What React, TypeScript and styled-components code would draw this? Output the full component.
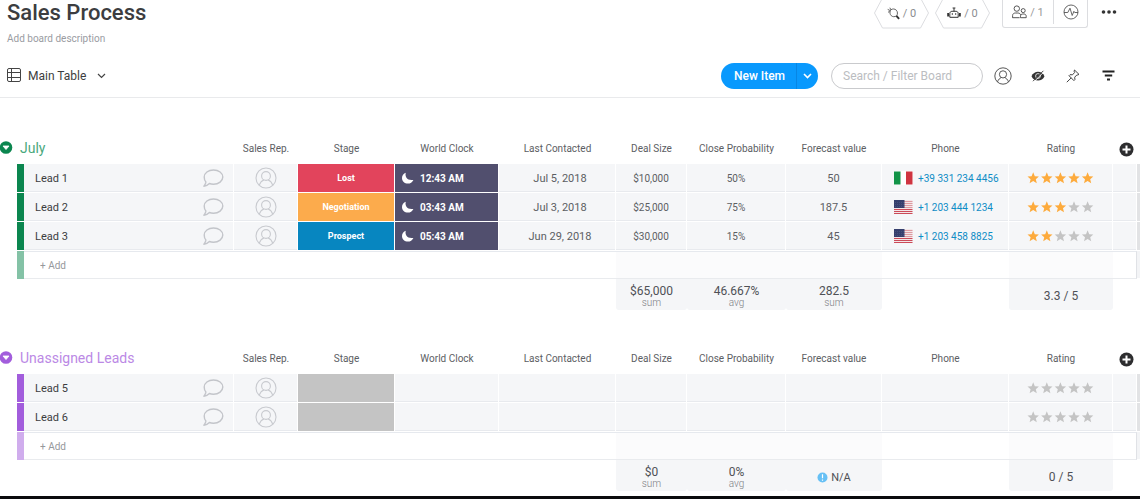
import React from 'react';
import styled, { createGlobalStyle } from 'styled-components';

const GlobalStyle = createGlobalStyle`
  * { box-sizing: border-box; }
  body {
    margin: 0;
    background: #fff;
    color: #3c3d40;
    font-family: Roboto, "Liberation Sans", sans-serif;
    font-size: 12px;
  }
  button, input { font-family: inherit; }
`;

/* ---------- Layout ---------- */

const Page = styled.div`
  display: flex;
  flex-direction: column;
`;

const Header = styled.header`
  display: flex;
  flex-direction: column;
  border-bottom: 1px solid #e9eaec;
`;

const HeaderTop = styled.div`
  display: flex;
  justify-content: space-between;
  align-items: flex-start;
  height: 54px;
  padding: 0 22px 0 7px;
`;

const Titles = styled.div`
  display: flex;
  flex-direction: column;
`;

const Title = styled.h1`
  margin: 0;
  font-size: 22px;
  line-height: 26px;
  font-weight: 500;
`;

const Description = styled.p`
  margin: 5px 0 0;
  font-size: 10px;
  line-height: 16px;
  color: #9a9ca2;
`;

const BoardActions = styled.div`
  display: flex;
  align-items: flex-start;
`;

const PlainButton = styled.button`
  display: inline-flex;
  align-items: center;
  justify-content: center;
  padding: 0;
  border: 0;
  background: none;
  color: inherit;
  font-size: 12px;
  cursor: pointer;
`;

const HexButton = styled(PlainButton)`
  position: relative;
  width: 55px;
  height: 29px;
  margin-right: 6px;
  padding-bottom: 3px;
  gap: 3px;
  color: #8a8c90;
  font-size: 11px;
`;

const HexOutline = styled.svg`
  position: absolute;
  inset: 0;
`;

const ActionBox = styled.div`
  display: flex;
  height: 28px;
  margin: 0 12px 0 6px;
  border: 1px solid #dcdde0;
  border-top: 0;
  border-radius: 0 0 3px 3px;
`;

const BoxButton = styled(PlainButton)<{ $width: number; $divided?: boolean }>`
  width: ${p => p.$width}px;
  height: 24px;
  gap: 3px;
  color: #999;
  font-size: 11px;
  border-right: ${p => (p.$divided ? '1px solid #dcdde0' : '0')};
`;

const MoreButton = styled(PlainButton)`
  width: 18px;
  height: 24px;
`;

const Toolbar = styled.div`
  display: flex;
  justify-content: space-between;
  align-items: center;
  height: 43px;
  padding: 0 22px 0 7px;
`;

const ViewButton = styled(PlainButton)`
  font-size: 12px;
  gap: 6px;
  svg:last-child { margin-left: 5px; }
`;

const Tools = styled.div`
  display: flex;
  align-items: center;
`;

const SplitButton = styled.div`
  display: flex;
  height: 26px;
  margin-right: 13px;
  border-radius: 13px;
  overflow: hidden;
  background: #0999fd;
  color: #fff;
`;

const NewItem = styled(PlainButton)`
  width: 76px;
  padding-left: 2px;
  font-weight: 500;
  border-right: 1px solid #0786e4;
`;

const NewItemMenu = styled(PlainButton)`
  width: 21px;
`;

const Search = styled.input`
  width: 152px;
  height: 26px;
  margin-right: 10px;
  padding: 0 11px;
  border: 1px solid #c9cacd;
  border-radius: 13px;
  outline: 0;
  font-size: 12px;
  color: #333;
  &::placeholder { color: #bbbdc1; opacity: 1; }
`;

const ToolIcons = styled.div`
  display: flex;
  gap: 15px;
`;

const ToolButton = styled(PlainButton)`
  width: 20px;
  height: 20px;
`;

const Groups = styled.main`
  display: flex;
  flex-direction: column;
  gap: 32px;
  padding: 34px 0 5px;
  overflow-x: auto;
`;

const BottomBar = styled.div`
  height: 3px;
  background: #0b0b0d;
`;

/* ---------- Table ---------- */

const Table = styled.table`
  width: 100%;
  min-width: 1060px;
  table-layout: fixed;
  border-spacing: 0;
  td, th { padding: 0; }
`;

const Col = styled.col<{ $width?: number }>`
  width: ${p => (p.$width ? `${p.$width}px` : 'auto')};
`;

const ColumnHead = styled.th`
  height: 32px;
  font-size: 10px;
  font-weight: 400;
  color: #5c5e63;
  text-align: center;
  white-space: nowrap;
  svg { display: block; }
`;

const GroupHead = styled(ColumnHead)`
  text-align: left;
`;

const GroupToggle = styled(PlainButton)<{ $color: string }>`
  gap: 7px;
  font-size: 14px;
  color: ${p => p.$color};
`;

const AddColumn = styled(PlainButton)`
  display: flex;
  margin: 2px auto 0;
`;

const Bar = styled.td<{ $color: string; $faded?: boolean }>`
  background: ${p => p.$color};
  background-clip: padding-box;
  border-bottom: ${p => (p.$faded ? 0 : 1)}px solid #fff;
  opacity: ${p => (p.$faded ? 0.5 : 1)};
`;

const Cell = styled.td`
  height: 29px;
  text-align: center;
  font-size: 10px;
  color: #5c5e63;
  background: #f5f6f8;
  background-clip: padding-box;
  border-right: 1px solid #fff;
  border-bottom: 1px solid #fff;
  box-shadow: inset 0 -1px #e8eaee;
`;

const WideTextCell = styled(Cell)`
  font-size: 11px;
`;

const DateCell = styled(WideTextCell)`
  && { padding-left: 6px; }
`;

const NameInner = styled.div`
  display: flex;
  align-items: center;
  justify-content: space-between;
  padding: 0 9px 0 11px;
  font-size: 11px;
  color: #3c3d40;
`;

const StageCell = styled(Cell)<{ $color: string }>`
  background-color: ${p => p.$color};
  color: #fff;
  font-size: 9px;
  font-weight: 700;
  box-shadow: none;
`;

const ClockCell = styled(Cell)`
  background-color: #514f6e;
  color: #fff;
  font-weight: 700;
  box-shadow: none;
`;

const CellRow = styled.div<{ $gap: number; $pad: number }>`
  display: flex;
  align-items: center;
  gap: ${p => p.$gap}px;
  padding-left: ${p => p.$pad}px;
  white-space: nowrap;
`;

const PhoneLink = styled.a`
  font-size: 10px;
  color: #0f8dc6;
  text-decoration: none;
`;

const Scroll = styled.td<{ $light?: boolean }>`
  background: ${p => (p.$light ? '#f3f4f6' : '#e2e3e5')};
  background-clip: padding-box;
  border-bottom: 1px solid #fff;
`;

const AddCell = styled.td<{ $tint?: boolean; $end?: boolean }>`
  height: 28px;
  background: ${p => (p.$tint ? '#fbfbfc' : '#fff')};
  border-top: 1px solid #e6e9ee;
  border-bottom: 1px solid #e9ebee;
  border-right: ${p => (p.$end ? '1px solid #e0e2e6' : '0')};
`;

const AddInput = styled.input`
  display: block;
  width: 100%;
  height: 24px;
  padding: 0 16px;
  border: 0;
  outline: 0;
  background: none;
  font-size: 10px;
  &::placeholder { color: #96989c; opacity: 1; }
`;

const SumCell = styled.td<{ $filled?: boolean }>`
  height: 31px;
  text-align: center;
  background: ${p => (p.$filled ? '#f5f6f8' : 'transparent')};
  border-radius: 0 0 3px 3px;
  && { padding-top: 3px; }
`;

const SumValue = styled.div`
  display: flex;
  align-items: center;
  justify-content: center;
  gap: 3px;
  font-size: 12px;
  line-height: 13px;
  color: #4f5156;
`;

const NotAvailable = styled(SumValue)`
  font-size: 11px;
`;

const SumUnit = styled.div`
  font-size: 10px;
  line-height: 10px;
  font-weight: 300;
  color: #7d7f85;
`;

/* ---------- Icons ---------- */

const Person = ({ size, color }: { size: number; color: string }) => (
  <svg width={size} height={size} viewBox="0 0 22 22" fill="none" stroke={color} strokeWidth="1.1">
    <circle cx="11" cy="11" r="10" />
    <circle cx="11" cy="9" r="4.4" />
    <path d="M4.3 18.2c.9-3 3-4.6 4.6-5.2M17.7 18.2c-.9-3-3-4.6-4.6-5.2" />
  </svg>
);

const Bubble = () => (
  <svg width="22" height="20" viewBox="0 0 22 20" fill="none" stroke="#c3c5ca" strokeWidth="1.4" strokeLinejoin="round">
    <path d="M11.500 2c5.200 0 9.300 3.100 9.300 7.100s-4.100 7.100-9.300 7.100c-1.500 0-2.900-.2-4.100-.7-1.600 1.700-3.500 2.500-5.500 2.700 1.200-1.300 1.900-2.700 2-4.300C2.600 12.700 2.200 11 2.200 9.100c0-4 4.100-7.100 9.300-7.100Z" />
  </svg>
);

const Chevron = ({ color, width = 1.2 }: { color: string; width?: number }) => (
  <svg width="9" height="6" viewBox="0 0 9 6" fill="none" stroke={color} strokeWidth={width}>
    <path d="M1 1l3.500 3.500L8 1" />
  </svg>
);

const TableIcon = () => (
  <svg width="15" height="15" viewBox="0 0 15 15" fill="none" stroke="#444" strokeWidth="1">
    <rect x=".5" y=".5" width="13" height="13" rx="1.500" />
    <path d="M.5 4.500h13M.5 9.500h13M4.500.5v13" />
  </svg>
);

const Plug = () => (
  <svg width="13" height="13" viewBox="0 0 13 13" fill="none" stroke="#555" strokeWidth=".9" strokeLinejoin="round">
    <path d="M3.800 2.800C5.600 1.600 7.900 1.700 9.300 3.200c1.500 1.600 1.500 3.900.3 5.700-1.900 1.100-4 1.100-5.400-.3C2.800 7.200 2.600 5.200 3.400 3.700Z" />
    <path d="M.7 2.400l2.700 1.300M2.900.7l.9 2.100M1 5.200l1.800-.6" />
    <path d="M9.400 8.900l2.700 3" stroke="#333" strokeWidth="1.900" />
  </svg>
);

const Robot = () => (
  <svg width="14" height="12" viewBox="0 0 14 12" fill="none" stroke="#333" strokeWidth="1">
    <path d="M7 1v3M5.600 1h2.800" />
    <path d="M2.800 10.300V6.600c0-1.500 1-2.300 2.300-2.300h3.800c1.300 0 2.300.8 2.300 2.300v3.700Z" />
    <path d="M1.100 6v3.600M12.900 6v3.600" strokeWidth="1.800" />
    <path d="M5.300 6.200v1.600M8.700 6.200v1.600" />
  </svg>
);

const People = () => (
  <svg width="15" height="14" viewBox="0 0 15 14" fill="none" stroke="#444" strokeWidth=".9">
    <circle cx="4.800" cy="3.600" r="2.700" />
    <path d="M.6 12.800V10.500C.6 8.800 2 8 3.500 8h2.300c1.500 0 2.700.7 2.900 2.200M.6 12.700h7" />
    <circle cx="11.200" cy="5.600" r="2" />
    <path d="M8.500 12.700v-1.500c0-1.300 1-2.200 2.200-2.200h1.200c1.300 0 2.300.9 2.300 2.200v1.500Z" />
  </svg>
);

const Pulse = () => (
  <svg width="16" height="16" viewBox="0 0 16 16" fill="none" stroke="#555" strokeWidth=".9">
    <circle cx="8" cy="8" r="7" />
    <path d="M1 8.500h3.800L7 4.200l2.200 7.300 1.700-4.200.8 1.200H15" />
  </svg>
);

const HiddenEye = () => (
  <svg width="14" height="12" viewBox="0 0 14 12">
    <path d="M.5 6.300C1.800 3.200 4.200 1.700 7 1.700s5.200 1.500 6.500 4.600C12.200 9.400 9.800 10.500 7 10.500S1.800 9.400.5 6.300Z" fill="#333" />
    <circle cx="7" cy="6" r="2.400" fill="none" stroke="#fff" strokeWidth=".8" />
    <path d="M3.600 11.200 13 1.800" stroke="#fff" strokeWidth=".8" />
    <path d="M2 11.200 12.400.8" stroke="#444" strokeWidth="1" />
  </svg>
);

const Pin = () => (
  <svg width="14" height="14" viewBox="0 0 14 14" fill="none" stroke="#444" strokeWidth="1" strokeLinejoin="round">
    <path d="M8.500 1l4.500 4.400-1.300.6-.8-.1-2.200 2.300.2 2.400-1 1L3 6.700l1-1 2.500.100L8.600 3.500l-.5-1.300Z" />
    <path d="M5.200 8.900.8 13.200" />
  </svg>
);

const Filter = () => (
  <svg width="13" height="12" viewBox="0 0 13 12" stroke="#222" strokeWidth="1.800">
    <path d="M.5 1.500h12M2.800 5.500h7.400M5 9.500h3" />
  </svg>
);

const Dots = () => (
  <svg width="16" height="4" viewBox="0 0 16 4" fill="#333">
    <circle cx="2.500" cy="2" r="1.800" />
    <circle cx="8" cy="2" r="1.800" />
    <circle cx="13.500" cy="2" r="1.800" />
  </svg>
);

const Collapse = ({ color }: { color: string }) => (
  <svg width="13" height="13" viewBox="0 0 13 13">
    <circle cx="6" cy="6.500" r="6.300" fill={color} />
    <path d="M3 5h6L6 8.500Z" fill="#fff" stroke="#fff" strokeWidth=".8" strokeLinejoin="round" />
  </svg>
);

const Plus = () => (
  <svg width="15" height="15" viewBox="0 0 15 15">
    <circle cx="7.500" cy="7.500" r="7" fill="#2d2d2f" />
    <path d="M7.500 3.500v8M3.500 7.500h8" stroke="#fff" strokeWidth="2" />
  </svg>
);

const Moon = () => (
  <svg width="13" height="12" viewBox="0 0 13 12" fill="#fff">
    <path d="M4.800.8C3.600 4.700 6.400 9 12.400 7.900 11.300 10.300 9.300 11.600 6.900 11.600 3.600 11.600 1 9.200 1 6 1 3.600 2.500 1.600 4.800.8Z" />
  </svg>
);

const ItalyFlag = () => (
  <svg width="19" height="14" viewBox="0 0 19 14">
    <rect width="19" height="14" fill="#fff" />
    <rect y=".5" width="6.500" height="13" fill="#129347" />
    <rect x="12" y=".5" width="6.500" height="13" fill="#cf3440" />
  </svg>
);

const UsFlag = () => (
  <svg width="19" height="14" viewBox="0 0 19 14">
    <rect width="18.500" height="14" fill="#f3e6e8" />
    {[1, 3, 5, 7, 9, 11, 13].map(y => (
      <rect key={y} y={y} width="18.500" height="1" fill={y > 8 ? '#cb4a58' : '#dd9aa1'} />
    ))}
    <rect y="0" width="10.500" height="8" fill="#36406e" />
    {[2, 4, 6].map(y => (
      <path key={y} d={`M1 ${y + 0.5}h9`} stroke="#5a628c" strokeWidth=".6" strokeDasharray=".8 1.200" />
    ))}
  </svg>
);

const Info = () => (
  <svg width="11" height="11" viewBox="0 0 11 11">
    <circle cx="5.500" cy="5.500" r="5" fill="#66c0f5" />
    <path d="M5.500 2.300v4M5.500 7.400v1.300" stroke="#fff" strokeWidth="1.200" />
  </svg>
);

const Stars = ({ value }: { value: number }) => (
  <svg width="67" height="12" viewBox="0 0 67 12" role="img" aria-label={`${value} of 5`}>
    {[0, 1, 2, 3, 4].map(i => (
      <path
        key={i}
        transform={`translate(${i * 13.6 + 0.5} 0)`}
        fill={i < value ? '#fdab3d' : '#c4c4c4'}
        d="M5.700.3 7.300 4.200l4.100.3-3.100 2.700 1 4.100-3.600-2.200-3.600 2.200 1-4.100L0 4.500l4.100-.3Z"
      />
    ))}
  </svg>
);

const Hexagon = () => (
  <HexOutline width="55" height="29" viewBox="0 0 55 29" fill="none" stroke="#dcdde0">
    <path d="M8.500-2h38l8 15-8 15h-38l-8-15Z" />
  </HexOutline>
);

/* ---------- Data ---------- */

type Lead = {
  name: string;
  stage?: string;
  color: string;
  clock?: string;
  date?: string;
  deal?: string;
  probability?: string;
  forecast?: string;
  country?: 'it' | 'us';
  phone?: string;
  rating: number;
};

type Group = {
  title: string;
  color: string;
  titleColor: string;
  leads: Lead[];
  deal: string;
  probability: string;
  forecast?: string;
  rating: string;
};

const groups: Group[] = [
  {
    title: 'July',
    color: '#0b864f',
    titleColor: '#4aa87d',
    leads: [
      { name: 'Lead 1', stage: 'Lost', color: '#e2445c', clock: '12:43 AM', date: 'Jul 5, 2018', deal: '$10,000', probability: '50%', forecast: '50', country: 'it', phone: '+39 331 234 4456', rating: 5 },
      { name: 'Lead 2', stage: 'Negotiation', color: '#fcab4c', clock: '03:43 AM', date: 'Jul 3, 2018', deal: '$25,000', probability: '75%', forecast: '187.5', country: 'us', phone: '+1 203 444 1234', rating: 3 },
      { name: 'Lead 3', stage: 'Prospect', color: '#0786c0', clock: '05:43 AM', date: 'Jun 29, 2018', deal: '$30,000', probability: '15%', forecast: '45', country: 'us', phone: '+1 203 458 8825', rating: 2 },
    ],
    deal: '$65,000',
    probability: '46.667%',
    forecast: '282.5',
    rating: '3.3 / 5',
  },
  {
    title: 'Unassigned Leads',
    color: '#a25ddc',
    titleColor: '#bb89e5',
    leads: [
      { name: 'Lead 5', color: '#c4c4c4', rating: 0 },
      { name: 'Lead 6', color: '#c4c4c4', rating: 0 },
    ],
    deal: '$0',
    probability: '0%',
    rating: '0 / 5',
  },
];

const columns = ['Sales Rep.', 'Stage', 'World Clock', 'Last Contacted', 'Deal Size', 'Close Probability', 'Forecast value', 'Phone', 'Rating'];
const widths = [17, 7, undefined, 64, 97, 104, 117, 71, 99, 96, 127, 104, 24, 3];

/* ---------- Components ---------- */

const LeadRow = ({ lead, barColor }: { lead: Lead; barColor: string }) => (
  <tr>
    <td />
    <Bar $color={barColor} />
    <Cell>
      <NameInner>
        <span>{lead.name}</span>
        <PlainButton aria-label={`Updates for ${lead.name}`}><Bubble /></PlainButton>
      </NameInner>
    </Cell>
    <Cell>
      <CellRow $gap={0} $pad={21}>
        <PlainButton aria-label={`Assign ${lead.name}`}><Person size={22} color="#c8cacf" /></PlainButton>
      </CellRow>
    </Cell>
    <StageCell $color={lead.color}>{lead.stage}</StageCell>
    {lead.clock ? (
      <ClockCell><CellRow $gap={6} $pad={6}><Moon />{lead.clock}</CellRow></ClockCell>
    ) : <Cell />}
    <DateCell>{lead.date}</DateCell>
    <Cell>{lead.deal}</Cell>
    <Cell>{lead.probability}</Cell>
    <WideTextCell>{lead.forecast}</WideTextCell>
    <Cell>
      {lead.phone && (
        <CellRow $gap={5} $pad={12}>
          {lead.country === 'it' ? <ItalyFlag /> : <UsFlag />}
          <PhoneLink href={`tel:${lead.phone.replace(/ /g, '')}`}>{lead.phone}</PhoneLink>
        </CellRow>
      )}
    </Cell>
    <Cell><CellRow $gap={0} $pad={18}><Stars value={lead.rating} /></CellRow></Cell>
    <Cell />
    <Scroll />
  </tr>
);

const GroupTable = ({ group }: { group: Group }) => (
  <Table>
    <colgroup>{widths.map((w, i) => <Col key={i} $width={w} />)}</colgroup>
    <thead>
      <tr>
        <GroupHead colSpan={3}>
          <GroupToggle $color={group.titleColor}><Collapse color={group.color} />{group.title}</GroupToggle>
        </GroupHead>
        {columns.map(c => <ColumnHead key={c} scope="col">{c}</ColumnHead>)}
        <ColumnHead colSpan={2}><AddColumn aria-label="Add column"><Plus /></AddColumn></ColumnHead>
      </tr>
    </thead>
    <tbody>
      {group.leads.map(l => <LeadRow key={l.name} lead={l} barColor={group.color} />)}
      <tr>
        <td />
        <Bar $color={group.color} $faded />
        <AddCell><AddInput placeholder="+ Add" aria-label={`Add to ${group.title}`} /></AddCell>
        <AddCell colSpan={4} />
        <AddCell $tint colSpan={3} />
        <AddCell />
        <AddCell $tint />
        <AddCell $end />
        <Scroll $light />
      </tr>
    </tbody>
    <tfoot>
      <tr>
        <SumCell colSpan={7} />
        <SumCell $filled><SumValue>{group.deal}</SumValue><SumUnit>sum</SumUnit></SumCell>
        <SumCell $filled><SumValue>{group.probability}</SumValue><SumUnit>avg</SumUnit></SumCell>
        <SumCell $filled>
          {group.forecast ? (
            <><SumValue>{group.forecast}</SumValue><SumUnit>sum</SumUnit></>
          ) : (
            <NotAvailable><Info />N/A</NotAvailable>
          )}
        </SumCell>
        <SumCell />
        <SumCell $filled><SumValue>{group.rating}</SumValue></SumCell>
        <SumCell colSpan={2} />
      </tr>
    </tfoot>
  </Table>
);

export default function App() {
  return (
    <Page>
      <GlobalStyle />
      <Header>
        <HeaderTop>
          <Titles>
            <Title>Sales Process</Title>
            <Description>Add board description</Description>
          </Titles>
          <BoardActions>
            <HexButton aria-label="Integrations"><Hexagon /><Plug />/ 0</HexButton>
            <HexButton aria-label="Automations"><Hexagon /><Robot />/ 0</HexButton>
            <ActionBox>
              <BoxButton $width={51} $divided aria-label="Members"><People />/ 1</BoxButton>
              <BoxButton $width={33} aria-label="Activity"><Pulse /></BoxButton>
            </ActionBox>
            <MoreButton aria-label="More"><Dots /></MoreButton>
          </BoardActions>
        </HeaderTop>
        <Toolbar>
          <ViewButton><TableIcon />Main Table<Chevron color="#444" /></ViewButton>
          <Tools>
            <SplitButton>
              <NewItem>New Item</NewItem>
              <NewItemMenu aria-label="More item types"><Chevron color="#fff" width={1.6} /></NewItemMenu>
            </SplitButton>
            <Search placeholder="Search / Filter Board" aria-label="Search / Filter Board" />
            <ToolIcons>
              <ToolButton aria-label="Filter by person"><Person size={18} color="#444" /></ToolButton>
              <ToolButton aria-label="Hidden columns"><HiddenEye /></ToolButton>
              <ToolButton aria-label="Pin columns"><Pin /></ToolButton>
              <ToolButton aria-label="Filter"><Filter /></ToolButton>
            </ToolIcons>
          </Tools>
        </Toolbar>
      </Header>
      <Groups>
        {groups.map(g => <GroupTable key={g.title} group={g} />)}
      </Groups>
      <BottomBar />
    </Page>
  );
}
